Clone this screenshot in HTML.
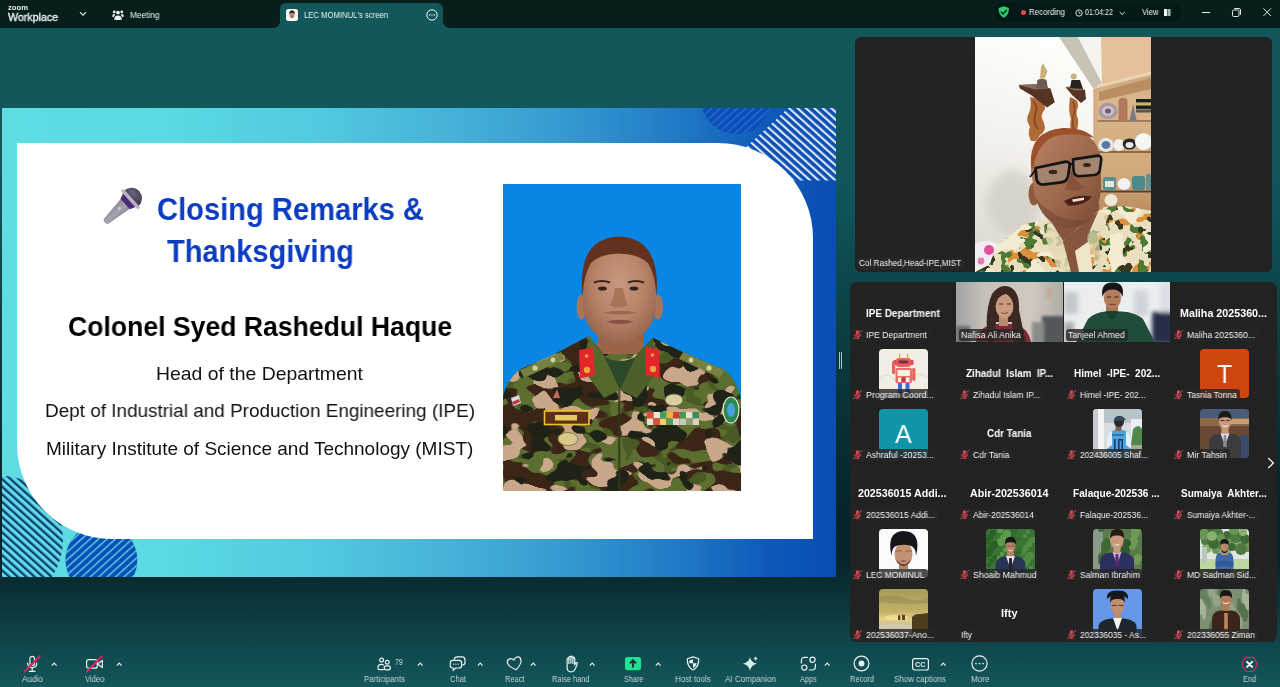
<!DOCTYPE html>
<html lang="en"><head><meta charset="utf-8"><title>Zoom Meeting</title><style>
*{box-sizing:border-box;margin:0;padding:0}
html,body{width:1280px;height:687px;overflow:hidden}
body{position:relative;font-family:"Liberation Sans",sans-serif;color:#fff;
 background:linear-gradient(180deg,#12585b 0px,#12585b 150px,#10545a 200px,#0c4448 300px,#0a3a3e 360px,#062e32 440px,#042529 520px,#05262a 560px,#082c30 578px,#104a4e 655px,#13565a 687px)}
.t{position:absolute;white-space:pre;line-height:1;transform-origin:0 0;display:block;will-change:transform}
.abs{position:absolute}
#titlebar{position:absolute;left:0;top:0;width:1280px;height:28px;background:#071e1d}
#tab{position:absolute;left:280px;top:3px;width:163px;height:25px;background:#12585b;border-radius:6px 6px 0 0}
#tab:before,#tab:after{content:"";position:absolute;bottom:0;width:6px;height:6px}
#tab:before{left:-6px;background:radial-gradient(circle at 0 0,rgba(0,0,0,0) 5.5px,#12585b 6px)}
#tab:after{right:-6px;background:radial-gradient(circle at 100% 0,rgba(0,0,0,0) 5.5px,#12585b 6px)}
#pill{position:absolute;left:994px;top:3px;width:187px;height:19px;border-radius:9.5px;background:#041817}
#slide{position:absolute;left:2px;top:108px;width:834px;height:469px;overflow:hidden;
 background:linear-gradient(90deg,#5fdde3 0%,#5cd9e2 20%,#52c9df 38%,#46b4d9 53%,#3599d0 68%,#2079c6 81%,#0e59b8 92%,#0a4db4 100%)}
#card{position:absolute;left:15px;top:35px;width:796px;height:396px;background:#fff;border-radius:0 95px 0 95px}
#speaker{position:absolute;left:855px;top:37px;width:417px;height:235px;background:#222;border-radius:6px;overflow:hidden}
#gallery{position:absolute;left:850px;top:282px;width:427px;height:360px;background:#222;border-radius:7px;overflow:hidden}
.tile{position:absolute;width:107px;height:60px}
.av{position:absolute;left:29px;top:6.5px;width:49px;height:49px;border-radius:4px;overflow:hidden}
.av svg,.vid svg{display:block}
.vid{position:absolute;left:0;top:0;width:106.3px;height:60px;overflow:hidden}
.lb{position:absolute;left:2px;top:46.5px;height:12px;background:rgba(38,38,38,.82);border-radius:3px}
#toolbar{position:absolute;left:0;top:650px;width:1280px;height:37px}
svg{overflow:visible}
</style></head>
<body>
<div id="titlebar"><span class="t" style="left:8.00px;top:3.85px;font-size:7.5px;font-weight:700;color:#e9f3f3;transform:scaleX(1.0207);">zoom</span><span class="t" style="left:8.00px;top:11.50px;font-size:11px;color:#e9f3f3;transform:scaleX(0.9659);-webkit-text-stroke:.35px #e9f3f3;">Workplace</span><svg class="abs" style="left:79px;top:11px" width="8" height="6" viewBox="0 0 8 6" ><path d="M1 1.2 L4 4.2 L7 1.2" fill="none" stroke="#e9f3f3" stroke-width="1.1"/></svg><svg class="abs" style="left:112px;top:9px" width="12" height="12" viewBox="0 0 12 12" ><g fill="#e9f3f3"><circle cx="6" cy="3.6" r="1.9"/><circle cx="2.2" cy="2.9" r="1.4"/><circle cx="9.8" cy="2.9" r="1.4"/><path d="M2.2 10.6 C2.2 7.6 3.6 6.4 6 6.4 C8.4 6.4 9.8 7.6 9.8 10.6 Q6 11.6 2.2 10.6Z"/><path d="M0.2 7.6 C0.2 5.6 1.1 4.9 2.6 5 L3.3 6 C2.3 6.8 2 7.6 1.9 8.3 Z"/><path d="M11.8 7.6 C11.8 5.6 10.9 4.9 9.4 5 L8.7 6 C9.7 6.8 10 7.6 10.1 8.3 Z"/></g></svg><span class="t" style="left:130.00px;top:10.80px;font-size:9px;color:#e9f3f3;transform:scaleX(0.9210);">Meeting</span><div id="tab"></div><svg class="abs" style="left:286px;top:9px" width="12" height="12" viewBox="0 0 12 12" ><rect width="12" height="12" rx="2.5" fill="#f4f4f4"/><path d="M2 12 Q2.5 9.5 6 9.5 Q9.5 9.5 10 12Z" fill="#fff"/><ellipse cx="6" cy="6" rx="2.4" ry="3" fill="#b8866a"/><path d="M3.2 5.2 Q3 1.6 6 1.6 Q9 1.6 8.8 5.2 Q8 3.6 6 3.8 Q4 3.6 3.2 5.2Z" fill="#1c1c22"/><path d="M4.3 7.6 Q6 9.6 7.7 7.6 Q6 8.4 4.3 7.6Z" fill="#3a2a24"/></svg><span class="t" style="left:304.00px;top:11.00px;font-size:9px;color:#e9f3f3;transform:scaleX(0.8550);">LEC MOMINUL's screen</span><svg class="abs" style="left:426px;top:8.5px" width="12" height="12" viewBox="0 0 12 12" ><circle cx="6" cy="6" r="5.2" fill="none" stroke="#e9f3f3" stroke-width="1"/><circle cx="3.6" cy="6" r=".7" fill="#e9f3f3"/><circle cx="6" cy="6" r=".7" fill="#e9f3f3"/><circle cx="8.4" cy="6" r=".7" fill="#e9f3f3"/></svg><div id="pill"></div><svg class="abs" style="left:998px;top:6.3px" width="11.5" height="12" viewBox="0 0 11.5 12" ><path d="M5.75 0.3 L10.8 2 C11 6.5 9.6 9.8 5.75 11.7 C1.9 9.8 .5 6.5 .7 2Z" fill="#2ecc6f"/><path d="M3.2 6 L5 7.9 L8.4 4.2" fill="none" stroke="#0a2a1c" stroke-width="1.5" stroke-linecap="round" stroke-linejoin="round"/></svg><div class="abs" style="left:1021px;top:10px;width:5.4px;height:5.4px;border-radius:50%;background:#f0464e"></div><span class="t" style="left:1029.20px;top:7.90px;font-size:9px;color:#e9f3f3;transform:scaleX(0.8774);">Recording</span><svg class="abs" style="left:1074.5px;top:8.7px" width="8" height="8" viewBox="0 0 8 8" ><circle cx="4" cy="4" r="3.2" fill="none" stroke="#e9f3f3" stroke-width=".9"/><path d="M4 2.2 V4.2 H5.6" fill="none" stroke="#e9f3f3" stroke-width=".8"/></svg><span class="t" style="left:1085.30px;top:7.90px;font-size:9px;color:#e9f3f3;transform:scaleX(0.7989);">01:04:22</span><svg class="abs" style="left:1118.5px;top:10.5px" width="6.4" height="5" viewBox="0 0 6.4 5" ><path d="M.7 1 L3.2 3.5 L5.7 1" fill="none" stroke="#e9f3f3" stroke-width="1"/></svg><span class="t" style="left:1141.70px;top:7.90px;font-size:9px;color:#e9f3f3;transform:scaleX(0.8575);">View</span><svg class="abs" style="left:1164.3px;top:8.8px" width="6.6" height="7" viewBox="0 0 6.6 7" ><rect x="0" y="0" width="3.1" height="7" fill="#f2f6f6"/><rect x="3.5" y="0" width="3.1" height="7" fill="#9fb0b0"/></svg><div class="abs" style="left:1201.5px;top:12px;width:8px;height:1px;background:#dfe9e9"></div><svg class="abs" style="left:1231.5px;top:7.5px" width="9" height="9" viewBox="0 0 9 9" ><rect x=".5" y="2" width="6.5" height="6.5" rx="1.2" fill="none" stroke="#dfe9e9" stroke-width="1"/><path d="M2.2 .5 H7 Q8.5 .5 8.5 2 V6.8" fill="none" stroke="#dfe9e9" stroke-width="1"/></svg><svg class="abs" style="left:1262.5px;top:8.3px" width="8.4" height="8.4" viewBox="0 0 8.4 8.4" ><path d="M.4 .4 L8 8 M8 .4 L.4 8" stroke="#dfe9e9" stroke-width="1" fill="none"/></svg></div>
<div id="slide"><svg class="abs" style="left:0px;top:0px" width="834" height="469" viewBox="0 0 834 469" ><defs>
<pattern id="pw" width="5.65" height="5.65" patternUnits="userSpaceOnUse" patternTransform="rotate(-48)"><rect width="2.1" height="5.65" fill="#dfe8fa"/></pattern>
<pattern id="pn" width="5.65" height="5.65" patternUnits="userSpaceOnUse" patternTransform="rotate(-48)"><rect width="2.3" height="5.65" fill="#0c3c74"/></pattern>
<pattern id="pb" width="5.65" height="5.65" patternUnits="userSpaceOnUse" patternTransform="rotate(48)"><rect width="1.1" height="5.65" fill="#2f74cf"/></pattern>
<pattern id="pc" width="5.65" height="5.65" patternUnits="userSpaceOnUse" patternTransform="rotate(48)"><rect width="1.3" height="5.65" fill="#62d8e6"/></pattern>
</defs>
<circle cx="734" cy="-9.2" r="35.2" fill="#0a4fb9"/><circle cx="734" cy="-9.2" r="35.2" fill="url(#pb)"/>
<path d="M786.2 0 H834 V72.6 H790 L740 43 Z" fill="#0d50b4"/>
<path d="M786.2 0 H834 V72.6 H790 L740 43 Z" fill="url(#pw)"/>
<ellipse cx="0" cy="432" rx="61" ry="64" fill="url(#pn)"/>
<circle cx="99.4" cy="452" r="36" fill="#0a50b6"/><circle cx="99.4" cy="452" r="36" fill="url(#pc)"/></svg><div id="card"></div><svg class="abs" style="left:0px;top:0px" width="834" height="469" viewBox="0 0 834 469" ><defs><linearGradient id="mh" x1="0" y1="0" x2="0" y2="1"><stop offset="0" stop-color="#8d8996"/><stop offset=".55" stop-color="#a7a3af"/><stop offset="1" stop-color="#8a8693"/></linearGradient>
<radialGradient id="md" cx=".45" cy=".35" r=".8"><stop offset="0" stop-color="#6b6276"/><stop offset="1" stop-color="#3b3346"/></radialGradient></defs>
<g transform="translate(102.8 114.6) rotate(-42.4) scale(1.06)">
<path d="M3 -3.3 L27 -6.3 V6.3 L3 3.3 Q0 3.3 0 0 Q0 -3.3 3 -3.3 Z" fill="url(#mh)"/>
<path d="M26 -6.6 L32.5 -9.2 V9.2 L26 6.6 Z" fill="#4a2b78"/>
<path d="M34 -10 A10 10 0 0 1 34 10 Z" fill="url(#md)"/>
<rect x="31.2" y="-12" width="3.2" height="24" rx="1.6" fill="#b9b3c3"/>
<circle cx="19" cy="-.6" r="1.5" fill="#cdc5d6"/>
</g></svg><span class="t" style="left:155.20px;top:86.10px;font-size:31px;font-weight:700;color:#0b3cc1;transform:scaleX(0.9393);">Closing Remarks &amp;</span><span class="t" style="left:165.00px;top:128.30px;font-size:31px;font-weight:700;color:#0b3cc1;transform:scaleX(0.9359);">Thanksgiving</span><span class="t" style="left:65.50px;top:205.90px;font-size:27px;font-weight:700;color:#000;transform:scaleX(0.9849);">Colonel Syed Rashedul Haque</span><span class="t" style="left:154.00px;top:255.70px;font-size:19px;color:#111;transform:scaleX(1.0207);">Head of the Department</span><span class="t" style="left:43.00px;top:292.90px;font-size:19px;color:#111;transform:scaleX(0.9954);">Dept of Industrial and Production Engineering (IPE)</span><span class="t" style="left:44.00px;top:330.90px;font-size:19px;color:#111;">Military Institute of Science and Technology (MIST)</span><div class="abs" style="left:501px;top:76px;width:238px;height:307px;overflow:hidden"><svg width="238" height="307" viewBox="0 0 238 307"><defs><filter id="cm1" x="0" y="0" width="100%" height="100%" color-interpolation-filters="sRGB"><feTurbulence type="fractalNoise" baseFrequency="0.03 0.045" numOctaves="2" seed="4"/><feColorMatrix type="matrix" values="0 0 0 0 0.231 0 0 0 0 0.145 0 0 0 0 0.090 40 0 0 0 -20"/><feComposite in2="SourceGraphic" operator="in"/></filter><filter id="cm2" x="0" y="0" width="100%" height="100%" color-interpolation-filters="sRGB"><feTurbulence type="fractalNoise" baseFrequency="0.035 0.05" numOctaves="2" seed="11"/><feColorMatrix type="matrix" values="0 0 0 0 0.784 0 0 0 0 0.655 0 0 0 0 0.541 40 0 0 0 -22.6"/><feComposite in2="SourceGraphic" operator="in"/></filter><filter id="cm3" x="0" y="0" width="100%" height="100%" color-interpolation-filters="sRGB"><feTurbulence type="fractalNoise" baseFrequency="0.04 0.05" numOctaves="2" seed="23"/><feColorMatrix type="matrix" values="0 0 0 0 0.122 0 0 0 0 0.133 0 0 0 0 0.086 40 0 0 0 -23"/><feComposite in2="SourceGraphic" operator="in"/></filter><filter id="cm4" x="0" y="0" width="100%" height="100%" color-interpolation-filters="sRGB"><feTurbulence type="fractalNoise" baseFrequency="0.05 0.06" numOctaves="2" seed="31"/><feColorMatrix type="matrix" values="0 0 0 0 0.290 0 0 0 0 0.353 0 0 0 0 0.141 40 0 0 0 -22.4"/><feComposite in2="SourceGraphic" operator="in"/></filter><radialGradient id="ofc" cx=".5" cy=".42" r=".62"><stop offset="0" stop-color="#c79880"/><stop offset=".55" stop-color="#b88468"/><stop offset="1" stop-color="#96644c"/></radialGradient></defs><rect width="238" height="307" fill="#0985e3"/><path d="M94 140 H140 V186 H94 Z" fill="#9a6449"/><path d="M0 307 V214 Q3 197 16 186 L50 171 L86 152 L100 170 H134 L150 154 L186 171 L222 186 Q235 197 238 216 V307 Z" fill="#5c6e30"/><path d="M0 307 V214 Q3 197 16 186 L50 171 L86 152 L100 170 H134 L150 154 L186 171 L222 186 Q235 197 238 216 V307 Z" fill="#000" filter="url(#cm4)"/><path d="M0 307 V214 Q3 197 16 186 L50 171 L86 152 L100 170 H134 L150 154 L186 171 L222 186 Q235 197 238 216 V307 Z" fill="#000" filter="url(#cm1)"/><path d="M0 307 V214 Q3 197 16 186 L50 171 L86 152 L100 170 H134 L150 154 L186 171 L222 186 Q235 197 238 216 V307 Z" fill="#000" filter="url(#cm2)"/><path d="M0 307 V214 Q3 197 16 186 L50 171 L86 152 L100 170 H134 L150 154 L186 171 L222 186 Q235 197 238 216 V307 Z" fill="#000" filter="url(#cm3)"/><rect x="115" y="204" width="2.4" height="103" fill="#2f3818" opacity=".75"/><path d="M100 172 L117 206 L134 172 Q117 182 100 172Z" fill="#2c4a2a"/><path d="M86 152 L100 170 L117 206 L101 214 L79 184 Z" fill="#55692c"/><path d="M150 154 L134 170 L117 206 L134 214 L157 184Z" fill="#4c5f28"/><path d="M76 166 L90 163.5 L92 191 L77 194.5 Z" fill="#e3262b"/><path d="M142.5 163 L156 165.5 L157 194 L143 191 Z" fill="#e3262b"/><circle cx="84" cy="186" r="3.2" fill="#eda43a"/><circle cx="150" cy="185" r="3.2" fill="#eda43a"/><circle cx="83.6" cy="172" r="1.8" fill="#eda43a"/><circle cx="149.4" cy="171" r="1.8" fill="#eda43a"/><path d="M17 186 L58 168 L62 175 L21 194 Z" fill="#76803f"/><path d="M221 186 L180 168 L176 175 L217 194 Z" fill="#76803f"/><circle cx="32" cy="184" r="2.6" fill="#d8cf9a"/><circle cx="206" cy="184" r="2.6" fill="#d8cf9a"/><circle cx="50" cy="176" r="2.4" fill="#d8cf9a"/><circle cx="188" cy="176" r="2.4" fill="#d8cf9a"/><ellipse cx="78.5" cy="123" rx="5" ry="12.5" fill="#a8745a"/><ellipse cx="155" cy="123" rx="5" ry="12.5" fill="#a8745a"/><path d="M80 100 Q79 60 116 56 Q153 60 153 100 V122 Q152 140 140 150 Q128 158.5 116.5 158.5 Q104 158.5 93 150 Q81 140 80 122 Z" fill="url(#ofc)"/><path d="M79.5 112 Q74 54 116 52.5 Q158 54 153.5 112 Q152 90 145 79 Q134 69.5 116 69.5 Q98 69.5 88 79 Q81 90 79.5 112 Z" fill="#62321f"/><path d="M91 98.5 Q99 95.5 107 98.5 M125 98.5 Q133 95.5 141 98.5" stroke="#3a241a" stroke-width="2" fill="none"/><ellipse cx="99.4" cy="104.6" rx="4.4" ry="2" fill="#33211a"/><ellipse cx="131" cy="104.6" rx="4.4" ry="2" fill="#33211a"/><path d="M112 104 Q110 118 106.5 121 Q116 126 125.5 121 Q122 118 120 104" fill="#a87458"/><path d="M103 137.6 Q117 134 131 137.6 Q117 142.6 103 137.6Z" fill="#8a5044"/><path d="M100 129 Q117 124.5 134 129 Q117 132 100 129Z" fill="#8c5c48" opacity=".7"/><rect x="41.5" y="227" width="44.5" height="13.5" fill="#5a3018" stroke="#f0c030" stroke-width="1.6"/><rect x="52" y="231" width="22" height="5.5" fill="#e8c860"/><rect x="144" y="228" width="6.5" height="6.5" fill="#e34a3a"/><rect x="150.5" y="228" width="6.5" height="6.5" fill="#f0e6d0"/><rect x="157" y="228" width="6.5" height="6.5" fill="#3aa05a"/><rect x="163.5" y="228" width="6.5" height="6.5" fill="#e8b23a"/><rect x="170" y="228" width="6.5" height="6.5" fill="#d03a3a"/><rect x="176.5" y="228" width="6.5" height="6.5" fill="#4a9a4a"/><rect x="183" y="228" width="6.5" height="6.5" fill="#e8e0d0"/><rect x="189.5" y="228" width="6.5" height="6.5" fill="#3a8a5a"/><rect x="144" y="234.5" width="6.5" height="6.5" fill="#e8e0d0"/><rect x="150.5" y="234.5" width="6.5" height="6.5" fill="#d8503a"/><rect x="157" y="234.5" width="6.5" height="6.5" fill="#e8d070"/><rect x="163.5" y="234.5" width="6.5" height="6.5" fill="#5a9a5a"/><rect x="170" y="234.5" width="6.5" height="6.5" fill="#e0d8c8"/><rect x="176.5" y="234.5" width="6.5" height="6.5" fill="#c8c8b8"/><rect x="183" y="234.5" width="6.5" height="6.5" fill="#8aa070"/><rect x="189.5" y="234.5" width="6.5" height="6.5" fill="#d8d0c0"/><ellipse cx="65" cy="255" rx="10" ry="6.5" fill="#d8c98a" stroke="#8a7a3a" stroke-width="1"/><ellipse cx="171" cy="216" rx="9" ry="6" fill="#d8d0a0" stroke="#6a6a3a" stroke-width="1"/><ellipse cx="228" cy="226" rx="8" ry="13" fill="#2a8a4a" stroke="#e8e8d8" stroke-width="1.2"/><ellipse cx="228" cy="226" rx="4" ry="7" fill="#4aa0d8"/><path d="M8 214 l8 -3 l2 8 l-8 3z" fill="#d8d8e8"/><path d="M9 218 l7 -3 l1 3 l-7 3z" fill="#c03a3a"/><path d="M50 214 l4 -9 l3 9z" fill="#c86a5a"/></svg></div></div>
<div id="speaker"><div class="abs" style="left:120px;top:0;width:176px;height:235px;overflow:hidden"><svg width="176" height="235" viewBox="0 0 176 235"><defs><linearGradient id="sw" x1=".2" y1="0" x2="0" y2="1"><stop offset="0" stop-color="#fdfdfb"/><stop offset=".45" stop-color="#f3f1ec"/><stop offset="1" stop-color="#d9d5cc"/></linearGradient><linearGradient id="sf" x1="0" y1="0" x2="1" y2="1"><stop offset="0" stop-color="#b98262"/><stop offset=".55" stop-color="#9c684b"/><stop offset="1" stop-color="#774833"/></linearGradient><linearGradient id="sc" x1="0" y1="0" x2="0" y2="1"><stop offset="0" stop-color="#c9a47c"/><stop offset=".18" stop-color="#dbb78e"/><stop offset=".75" stop-color="#d0a878"/><stop offset="1" stop-color="#b98c5e"/></linearGradient><filter id="sbl"><feGaussianBlur stdDeviation="5"/></filter><filter id="sh1" x="0" y="0" width="100%" height="100%" color-interpolation-filters="sRGB"><feTurbulence type="fractalNoise" baseFrequency="0.07 0.08" numOctaves="2" seed="5"/><feColorMatrix type="matrix" values="0 0 0 0 0.863 0 0 0 0 0.561 0 0 0 0 0.235 40 0 0 0 -22.8"/><feComposite in2="SourceGraphic" operator="in"/></filter><filter id="sh2" x="0" y="0" width="100%" height="100%" color-interpolation-filters="sRGB"><feTurbulence type="fractalNoise" baseFrequency="0.08 0.09" numOctaves="2" seed="17"/><feColorMatrix type="matrix" values="0 0 0 0 0.310 0 0 0 0 0.478 0 0 0 0 0.208 40 0 0 0 -23"/><feComposite in2="SourceGraphic" operator="in"/></filter><filter id="sh3" x="0" y="0" width="100%" height="100%" color-interpolation-filters="sRGB"><feTurbulence type="fractalNoise" baseFrequency="0.1 0.11" numOctaves="2" seed="29"/><feColorMatrix type="matrix" values="0 0 0 0 0.208 0 0 0 0 0.220 0 0 0 0 0.122 40 0 0 0 -24.8"/><feComposite in2="SourceGraphic" operator="in"/></filter><filter id="sh4" x="0" y="0" width="100%" height="100%" color-interpolation-filters="sRGB"><feTurbulence type="fractalNoise" baseFrequency="0.06 0.07" numOctaves="2" seed="41"/><feColorMatrix type="matrix" values="0 0 0 0 0.957 0 0 0 0 0.925 0 0 0 0 0.824 40 0 0 0 -23.2"/><feComposite in2="SourceGraphic" operator="in"/></filter></defs><rect width="176" height="235" fill="url(#sw)"/><ellipse cx="38" cy="165" rx="26" ry="32" fill="#c9c4ba" opacity=".55" filter="url(#sbl)"/><path d="M84 0 H103 L127 46 L118.5 52 Z" fill="#c9c3b5"/><path d="M103 0 H127 V46 Z" fill="#f5f3ee"/><path d="M126 0 H176 V35 L127 47 Z" fill="#e4c19a"/><path d="M118.5 52 L127 47 L176 35 V41 L124 55 Z" fill="#ecd0aa"/><path d="M118.5 52 L176 38 V176 H118.5 Z" fill="url(#sc)"/><path d="M124 55 L176 41 V52 L124 64 Z" fill="#b98e62"/><rect x="122" y="83" width="54" height="1.8" fill="#9a7a58"/><rect x="122" y="114" width="54" height="2" fill="#8a6a4a"/><rect x="124" y="153.5" width="52" height="2" fill="#5a4030"/><rect x="118.5" y="52" width="4" height="124" fill="#d6ae80"/><ellipse cx="133" cy="74" rx="9.4" ry="8.2" fill="#a79aa6"/><ellipse cx="133" cy="74" rx="6" ry="5" fill="#d9c0c0"/><ellipse cx="133" cy="74" rx="3" ry="2.6" fill="#6a5a88"/><rect x="143.5" y="61" width="9" height="24" rx="3.5" fill="#b27a58"/><path d="M154.5 84 l3.6 -17 l3.6 17z" fill="#7a7a84"/><rect x="161" y="62" width="15" height="3.4" fill="#1c1c1c"/><rect x="161" y="66" width="15" height="2" fill="#c8b850"/><rect x="161" y="68.5" width="15" height="3.4" fill="#1c1c1c"/><rect x="161" y="72.5" width="15" height="3" fill="#555"/><ellipse cx="131" cy="108" rx="7.7" ry="7" fill="#e4e8ec"/><ellipse cx="131" cy="108" rx="4.4" ry="4" fill="#5c78a0"/><ellipse cx="144" cy="108" rx="5.6" ry="6" fill="#f0f0ee"/><ellipse cx="154.5" cy="107" rx="6.8" ry="5.6" fill="#242424"/><ellipse cx="154.5" cy="108" rx="4" ry="3" fill="#e8e8e8"/><ellipse cx="168.5" cy="104.5" rx="8.6" ry="8.6" fill="#f6f6f2"/><rect x="128" y="140" width="13" height="13" rx="2" fill="#5a9090"/><rect x="130" y="144" width="9" height="6" fill="#dfe8e0"/><ellipse cx="149" cy="147" rx="6.5" ry="6" fill="#f2f2f2"/><rect x="157" y="139" width="13" height="14" rx="3" fill="#4a8a8a"/><rect x="171" y="137" width="5" height="16" rx="2" fill="#6a9090"/><ellipse cx="136" cy="163" rx="6.5" ry="6" fill="#efe9d8"/><path d="M55 60 Q70 62 70 72 Q64 78 69 86 Q72 94 65 98 L61 104 H56 Q52 96 55 90 Q50 82 54 76 Q57 68 55 60Z" fill="#b06a36"/><path d="M58 64 Q64 70 60 78 Q58 86 63 92" stroke="#7e4420" stroke-width="1.6" fill="none"/><path d="M95 60 Q104 62 103 70 Q100 76 103 82 Q104 90 100 97 H97 Q94 88 96 82 Q93 74 95 60Z" fill="#b06a36"/><path d="M98 64 Q101 72 98 80 Q97 88 99 94" stroke="#7e4420" stroke-width="1.2" fill="none"/><path d="M43.8 48 L60 47.2 L75.5 51.5 L79.8 65.2 L72 70.4 L56.7 58.4 L45 51.5 Z" fill="#553426"/><path d="M43.8 48 L60 47.2 L75.5 51.5 L60 52.5 Z" fill="#8a6a5c"/><path d="M90.5 50 L100 49.4 L110 53 L111 62 L106 66 L97 58 Z" fill="#553426"/><path d="M90.5 50 L100 49.4 L110 53 L100 53.6Z" fill="#8a6a5c"/><path d="M61 51.5 L62.5 43 Q67 40 71.5 43 L73 51.5Z" fill="#6c5c54"/><path d="M65 41 L66 30 L68 26 L70 30 L72.5 34 L70 41Z" fill="#c9b276"/><path d="M95 51 L96.5 43 H105 L108 52Z" fill="#26221e"/><circle cx="98.7" cy="39.5" r="3" fill="#c9b276"/><path d="M72 176 L124 166 L126 200 L96 235 H88 L84 200 Z" fill="#85553d"/><path d="M0 235 L9 228 L17 213 L48 187.5 L74 182 L88 204 L123.6 173.7 L129 170 L150 169 L176 173.7 V235 Z" fill="#e9dfbe"/><path d="M0 235 L9 228 L17 213 L48 187.5 L74 182 L88 204 L123.6 173.7 L129 170 L150 169 L176 173.7 V235 Z" fill="#000" filter="url(#sh1)"/><path d="M0 235 L9 228 L17 213 L48 187.5 L74 182 L88 204 L123.6 173.7 L129 170 L150 169 L176 173.7 V235 Z" fill="#000" filter="url(#sh2)"/><path d="M0 235 L9 228 L17 213 L48 187.5 L74 182 L88 204 L123.6 173.7 L129 170 L150 169 L176 173.7 V235 Z" fill="#000" filter="url(#sh3)"/><path d="M0 235 L9 228 L17 213 L48 187.5 L74 182 L88 204 L123.6 173.7 L129 170 L150 169 L176 173.7 V235 Z" fill="#000" filter="url(#sh4)"/><path d="M74 182 L88 204 L96 235 H84 L70 200 Z" fill="#e4dab6" opacity=".85"/><path d="M123.6 173.7 L112 200 L122 235 H128 L124 204 L134 178Z" fill="#e4dab6" opacity=".7"/><path d="M88 204 L123.6 173.7 L112 200 L118 235 H96 Z" fill="#85553d"/><path d="M100 214 L114 204 L118 235 H104Z" fill="#efe6c8"/><path d="M0 207 Q12 201 23 207 L14 228 L0 235 Z" fill="#f0eef2"/><circle cx="14" cy="213" r="5" fill="#e0509a"/><circle cx="6" cy="224" r="3.4" fill="#e87ab0"/><ellipse cx="59" cy="157" rx="5.5" ry="11.5" fill="#8f5a40"/><path d="M56 134 Q53 96 88 92.5 Q122 91 126 124 L126 152 Q124 176 112 186 Q100 193 88 190.5 Q68 185 60 160 Z" fill="url(#sf)"/><path d="M56 130 Q53 93.5 88 91 Q110 90.5 119 101 Q100 94.5 80 99 Q62 106 58 132 Z" fill="#9c502c"/><path d="M60 160 Q68 185 88 190.5 Q104 192 116 182 Q100 186 86 180 Q70 174 60 160Z" fill="#6e4230" opacity=".5"/><path d="M60.5 131 L91 124.6 Q95 124.4 94.6 129 L93 140 Q91 145 86 145.4 L68 147.6 Q62.5 147.6 61.6 142 Z" fill="#a4846f" stroke="#141414" stroke-width="2.8" stroke-linejoin="round"/><path d="M98 122.4 L123 118.6 Q126.6 118.6 126.2 123 L124.8 133 Q124 137.4 119 138 L104 139.2 Q99.4 139.2 98.6 134 Z" fill="#a4846f" stroke="#141414" stroke-width="2.6" stroke-linejoin="round"/><path d="M94 128 L98.4 126.4" stroke="#141414" stroke-width="2.2"/><path d="M60.5 133 L55 140" stroke="#141414" stroke-width="2"/><ellipse cx="78" cy="135" rx="4.4" ry="2.2" fill="#3a2418"/><ellipse cx="112" cy="128" rx="4" ry="2" fill="#3a2418"/><path d="M96 133 Q101 146 109 150 Q102 156.5 90 152 Q92 146 96 133Z" fill="#86523a"/><path d="M89 164 Q103 156.5 117 159.6 Q110 169.4 93 168.6 Z" fill="#4a2018"/><path d="M97 162.6 L109 160.4 L109 163 L98 165Z" fill="#e8e0d0"/></svg></div><div class="abs" style="left:1.5px;top:220.5px;width:107.5px;height:12.5px;background:rgba(40,40,40,.85);border-radius:3px"></div><span class="t" style="left:3.90px;top:222.10px;font-size:9px;color:#f2f2f2;transform:scaleX(0.9090);">Col Rashed,Head-IPE,MIST</span></div>
<div id="gallery"><div class="tile" style="left:0px;top:0px"><span class="t" style="left:15.60px;top:27.20px;font-size:10px;font-weight:700;transform:scaleX(0.9910);">IPE Department</span><div class="lb" style="left:2px;width:78px"><svg class="abs" style="left:.9px;top:1.5px" width="9.2" height="9.2" viewBox="0 0 10 10"><g fill="#ee4452"><rect x="3.2" y=".3" width="3.6" height="6" rx="1.8"/><path d="M1.5 4.3 h1 q0 2.6 2.5 2.6 q2.5 0 2.5 -2.6 h1 q0 3.2 -2.9 3.5 v.9 h1.5 v.9 h-4.2 v-.9 h1.5 v-.9 q-2.9 -.3 -2.9 -3.5z"/></g><path d="M1 9.3 L9 .9" stroke="#2a2a2a" stroke-width="1.7"/><path d="M.7 9.6 L9.3 .6" stroke="#f2606c" stroke-width=".85" stroke-linecap="round"/></svg></div><span class="t" style="left:15.50px;top:48.85px;font-size:9px;color:#f4f4f4;transform:scaleX(0.9527);">IPE Department</span></div><div class="tile" style="left:107px;top:0px"><div class="vid" style="left:-0.8px"><svg width="107" height="60" viewBox="0 0 107 60"><defs><linearGradient id="nf1" x1="0" y1="0" x2="1" y2="0"><stop offset="0" stop-color="#9fa1a4"/><stop offset=".25" stop-color="#c4bfb8"/><stop offset=".7" stop-color="#d0c9c0"/><stop offset="1" stop-color="#b0aca6"/></linearGradient><filter id="nfb"><feGaussianBlur stdDeviation="1.6"/></filter></defs><rect width="107" height="60" fill="url(#nf1)"/><g filter="url(#nfb)"><rect x="86" y="34" width="24" height="28" fill="#55595a"/><rect x="76" y="40" width="12" height="22" fill="#8a8c8a"/><rect x="90" y="6" width="6" height="10" fill="#c8a898"/><rect x="0" y="44" width="14" height="18" fill="#6a6c70"/></g><path d="M20 60 Q22 46 36 42 H58 Q72 45 75 60Z" fill="#7b2a38"/><path d="M32 60 Q28 30 36 12 Q44 1 54 5 Q64 10 63 28 Q66 44 70 60 H58 L56 40 H40 L38 60Z" fill="#3b2822"/><rect x="43" y="34" width="9" height="10" fill="#b98a70"/><ellipse cx="48.5" cy="24" rx="9" ry="12.5" fill="#c89a7e"/><path d="M39 24 Q38 8 50 7 Q60 9 58 26 Q56 14 50 12 Q42 13 39 24Z" fill="#3b2822"/><path d="M43 22 h4 M51 22 h4" stroke="#3a2a24" stroke-width=".9"/><path d="M45 30.6 Q48.5 32.6 52 30.6" stroke="#8a4a44" stroke-width="1" fill="none"/></svg></div><div class="lb" style="left:2px;width:65px"></div><span class="t" style="left:3.70px;top:48.85px;font-size:9px;color:#f4f4f4;transform:scaleX(0.9638);">Nafisa Ali Anika</span></div><div class="tile" style="left:214px;top:0px"><div class="vid" style="left:-0.1px"><svg width="107" height="60" viewBox="0 0 107 60"><defs><filter id="tjb"><feGaussianBlur stdDeviation="2"/></filter></defs><rect width="107" height="60" fill="#ecedef"/><g filter="url(#tjb)"><rect x="0" y="10" width="14" height="22" fill="#c4c8cc"/><rect x="70" y="8" width="14" height="26" fill="#d0d4da"/><rect x="88" y="30" width="22" height="32" fill="#272d4a"/><rect x="96" y="0" width="12" height="30" fill="#dcdfe6"/><rect x="0" y="40" width="10" height="22" fill="#a8acb0"/></g><path d="M12 60 L24 37 Q30 30.5 42 29.5 H58 Q72 30.5 79 37 L91 60Z" fill="#1f4d38"/><rect x="42" y="22" width="12" height="11" fill="#a87250"/><path d="M40 30 L48 38 L56 30 L52 29 H44Z" fill="#17402e"/><ellipse cx="48.5" cy="16" rx="8.6" ry="11" fill="#b27c5a"/><path d="M38.5 15 Q36 0 49 .5 Q61 0 58.5 15 Q56 7 48.5 7.5 Q41 7 38.5 15Z" fill="#16151a"/><path d="M43 15 h4 M50.5 15 h4" stroke="#2a1a16" stroke-width=".9"/><path d="M45.4 22.4 h6.4" stroke="#6a3a34" stroke-width=".9"/></svg></div><div class="lb" style="left:2px;width:61.9px"></div><span class="t" style="left:3.70px;top:48.85px;font-size:9px;color:#f4f4f4;transform:scaleX(0.9603);">Tanjeel Ahmed</span></div><div class="tile" style="left:321px;top:0px"><span class="t" style="left:9.00px;top:27.20px;font-size:10px;font-weight:700;transform:scaleX(1.0718);">Maliha 2025360...</span><div class="lb" style="left:2px;width:85px"><svg class="abs" style="left:.9px;top:1.5px" width="9.2" height="9.2" viewBox="0 0 10 10"><g fill="#ee4452"><rect x="3.2" y=".3" width="3.6" height="6" rx="1.8"/><path d="M1.5 4.3 h1 q0 2.6 2.5 2.6 q2.5 0 2.5 -2.6 h1 q0 3.2 -2.9 3.5 v.9 h1.5 v.9 h-4.2 v-.9 h1.5 v-.9 q-2.9 -.3 -2.9 -3.5z"/></g><path d="M1 9.3 L9 .9" stroke="#2a2a2a" stroke-width="1.7"/><path d="M.7 9.6 L9.3 .6" stroke="#f2606c" stroke-width=".85" stroke-linecap="round"/></svg></div><span class="t" style="left:15.50px;top:48.85px;font-size:9px;color:#f4f4f4;transform:scaleX(0.9502);">Maliha 2025360...</span></div><div class="tile" style="left:0px;top:60px"><div class="av"><svg width="49" height="49" viewBox="0 0 49 49"><rect x="0" y="0" width="49" height="49" fill="#f1eee6"/><path d="M0 30 Q8 22 14 30 T30 30 T49 28" fill="none" stroke="#d8d4cc" stroke-width=".8"/><rect x="17" y="9" width="15" height="9" rx="3" fill="#e9605c"/><rect x="19.5" y="11.5" width="10" height="3" rx="1" fill="#7a2a4a"/><rect x="14.5" y="11" width="3" height="5" rx="1" fill="#d94a4a"/><rect x="31.5" y="11" width="3" height="5" rx="1" fill="#d94a4a"/><rect x="20" y="4.5" width="1.2" height="5" fill="#d8b040"/><rect x="28" y="4.5" width="1.2" height="5" fill="#d8b040"/><rect x="16.5" y="19" width="16.5" height="15" rx="1.5" fill="#ee6c66"/><rect x="18.5" y="21" width="12.5" height="6" fill="#f6efe8"/><rect x="19" y="28.5" width="3" height="4.5" fill="#f6efe8"/><rect x="23" y="28.5" width="3" height="4.5" fill="#b23a4a"/><rect x="27" y="28.5" width="3.5" height="4.5" fill="#f6efe8"/><rect x="13" y="12" width="3.2" height="13" rx="1.4" fill="#e9605c"/><rect x="33.2" y="19" width="3.2" height="13" rx="1.4" fill="#e9605c"/><rect x="19" y="34" width="4" height="9" fill="#3b6bd6"/><rect x="26.5" y="34" width="4" height="9" fill="#3b6bd6"/><rect x="17.5" y="42.5" width="6" height="2.5" rx="1" fill="#2a4aa0"/><rect x="26" y="42.5" width="6" height="2.5" rx="1" fill="#2a4aa0"/></svg></div><div class="lb" style="left:2px;width:85px"><svg class="abs" style="left:.9px;top:1.5px" width="9.2" height="9.2" viewBox="0 0 10 10"><g fill="#ee4452"><rect x="3.2" y=".3" width="3.6" height="6" rx="1.8"/><path d="M1.5 4.3 h1 q0 2.6 2.5 2.6 q2.5 0 2.5 -2.6 h1 q0 3.2 -2.9 3.5 v.9 h1.5 v.9 h-4.2 v-.9 h1.5 v-.9 q-2.9 -.3 -2.9 -3.5z"/></g><path d="M1 9.3 L9 .9" stroke="#2a2a2a" stroke-width="1.7"/><path d="M.7 9.6 L9.3 .6" stroke="#f2606c" stroke-width=".85" stroke-linecap="round"/></svg></div><span class="t" style="left:15.50px;top:48.85px;font-size:9px;color:#f4f4f4;transform:scaleX(0.9851);">Program Coord...</span></div><div class="tile" style="left:107px;top:60px"><span class="t" style="left:9.00px;top:27.20px;font-size:10px;font-weight:700;transform:scaleX(0.9805);">Zihadul  Islam  IP...</span><div class="lb" style="left:2px;width:84px"><svg class="abs" style="left:.9px;top:1.5px" width="9.2" height="9.2" viewBox="0 0 10 10"><g fill="#ee4452"><rect x="3.2" y=".3" width="3.6" height="6" rx="1.8"/><path d="M1.5 4.3 h1 q0 2.6 2.5 2.6 q2.5 0 2.5 -2.6 h1 q0 3.2 -2.9 3.5 v.9 h1.5 v.9 h-4.2 v-.9 h1.5 v-.9 q-2.9 -.3 -2.9 -3.5z"/></g><path d="M1 9.3 L9 .9" stroke="#2a2a2a" stroke-width="1.7"/><path d="M.7 9.6 L9.3 .6" stroke="#f2606c" stroke-width=".85" stroke-linecap="round"/></svg></div><span class="t" style="left:15.50px;top:48.85px;font-size:9px;color:#f4f4f4;transform:scaleX(0.9453);">Zihadul Islam IP...</span></div><div class="tile" style="left:214px;top:60px"><span class="t" style="left:9.65px;top:27.20px;font-size:10px;font-weight:700;transform:scaleX(0.9947);">Himel  -IPE-  202...</span><div class="lb" style="left:2px;width:82.6px"><svg class="abs" style="left:.9px;top:1.5px" width="9.2" height="9.2" viewBox="0 0 10 10"><g fill="#ee4452"><rect x="3.2" y=".3" width="3.6" height="6" rx="1.8"/><path d="M1.5 4.3 h1 q0 2.6 2.5 2.6 q2.5 0 2.5 -2.6 h1 q0 3.2 -2.9 3.5 v.9 h1.5 v.9 h-4.2 v-.9 h1.5 v-.9 q-2.9 -.3 -2.9 -3.5z"/></g><path d="M1 9.3 L9 .9" stroke="#2a2a2a" stroke-width="1.7"/><path d="M.7 9.6 L9.3 .6" stroke="#f2606c" stroke-width=".85" stroke-linecap="round"/></svg></div><span class="t" style="left:15.50px;top:48.85px;font-size:9px;color:#f4f4f4;transform:scaleX(0.9235);">Himel -IPE- 202...</span></div><div class="tile" style="left:321px;top:60px"><div class="av"><svg width="49" height="49" viewBox="0 0 49 49"><rect x="0" y="0" width="49" height="49" fill="#cf4510"/></svg></div><span class="t" style="left:46.30px;top:18.60px;font-size:26px;transform:scaleX(0.9565);">T</span><div class="lb" style="left:2px;width:67px"><svg class="abs" style="left:.9px;top:1.5px" width="9.2" height="9.2" viewBox="0 0 10 10"><g fill="#ee4452"><rect x="3.2" y=".3" width="3.6" height="6" rx="1.8"/><path d="M1.5 4.3 h1 q0 2.6 2.5 2.6 q2.5 0 2.5 -2.6 h1 q0 3.2 -2.9 3.5 v.9 h1.5 v.9 h-4.2 v-.9 h1.5 v-.9 q-2.9 -.3 -2.9 -3.5z"/></g><path d="M1 9.3 L9 .9" stroke="#2a2a2a" stroke-width="1.7"/><path d="M.7 9.6 L9.3 .6" stroke="#f2606c" stroke-width=".85" stroke-linecap="round"/></svg></div><span class="t" style="left:15.50px;top:48.85px;font-size:9px;color:#f4f4f4;transform:scaleX(0.9456);">Tasnia Tonna</span></div><div class="tile" style="left:0px;top:120px"><div class="av"><svg width="49" height="49" viewBox="0 0 49 49"><rect x="0" y="0" width="49" height="49" fill="#0f95a8"/></svg></div><span class="t" style="left:44.80px;top:18.60px;font-size:26px;transform:scaleX(0.9686);">A</span><div class="lb" style="left:2px;width:85px"><svg class="abs" style="left:.9px;top:1.5px" width="9.2" height="9.2" viewBox="0 0 10 10"><g fill="#ee4452"><rect x="3.2" y=".3" width="3.6" height="6" rx="1.8"/><path d="M1.5 4.3 h1 q0 2.6 2.5 2.6 q2.5 0 2.5 -2.6 h1 q0 3.2 -2.9 3.5 v.9 h1.5 v.9 h-4.2 v-.9 h1.5 v-.9 q-2.9 -.3 -2.9 -3.5z"/></g><path d="M1 9.3 L9 .9" stroke="#2a2a2a" stroke-width="1.7"/><path d="M.7 9.6 L9.3 .6" stroke="#f2606c" stroke-width=".85" stroke-linecap="round"/></svg></div><span class="t" style="left:15.50px;top:48.85px;font-size:9px;color:#f4f4f4;transform:scaleX(0.9571);">Ashraful -20253...</span></div><div class="tile" style="left:107px;top:120px"><span class="t" style="left:30.25px;top:27.20px;font-size:10px;font-weight:700;transform:scaleX(0.9804);">Cdr Tania</span><div class="lb" style="left:2px;width:53.5px"><svg class="abs" style="left:.9px;top:1.5px" width="9.2" height="9.2" viewBox="0 0 10 10"><g fill="#ee4452"><rect x="3.2" y=".3" width="3.6" height="6" rx="1.8"/><path d="M1.5 4.3 h1 q0 2.6 2.5 2.6 q2.5 0 2.5 -2.6 h1 q0 3.2 -2.9 3.5 v.9 h1.5 v.9 h-4.2 v-.9 h1.5 v-.9 q-2.9 -.3 -2.9 -3.5z"/></g><path d="M1 9.3 L9 .9" stroke="#2a2a2a" stroke-width="1.7"/><path d="M.7 9.6 L9.3 .6" stroke="#f2606c" stroke-width=".85" stroke-linecap="round"/></svg></div><span class="t" style="left:15.50px;top:48.85px;font-size:9px;color:#f4f4f4;transform:scaleX(0.9515);">Cdr Tania</span></div><div class="tile" style="left:214px;top:120px"><div class="av"><svg width="49" height="49" viewBox="0 0 49 49"><rect x="0" y="0" width="49" height="49" fill="#d9dde0"/><rect x="0" y="0" width="49" height="14" fill="#b8c4cc"/><rect x="5" y="0" width="6" height="49" fill="#f4f4f2"/><rect x="0" y="0" width="5" height="49" fill="#c8ccd0"/><path d="M38 10 h11 v22 h-11z" fill="#e8eef2"/><path d="M40 20 Q46 14 49 20 V36 H38 Z" fill="#4f8a4a"/><rect x="36" y="36" width="13" height="13" fill="#a8a890"/><path d="M14 49 V30 Q14 23 22 21 H30 Q38 23 38 30 V49 Z" fill="#4ea4dc"/><path d="M14 30 Q14 24 19 22 L19 36 L14 40Z" fill="#e8eef4"/><path d="M38 30 Q38 24 33 22 L33 36 L38 40Z" fill="#e8eef4"/><rect x="22.5" y="14" width="6" height="8" fill="#8a6048"/><ellipse cx="26" cy="12.5" rx="5" ry="5.6" fill="#2a2a32"/><path d="M21 10 Q26 4 31.5 9 L33 11 L21 12Z" fill="#3a4a5a"/><path d="M21 30 h1.6 v12 h-1.6z M25 30 h5 v12 h-5z" fill="#173a6a"/><rect x="26.6" y="31.6" width="1.8" height="8.8" fill="#4ea4dc"/><rect x="19" y="25" width="12" height="2" fill="#2a5a8a" opacity=".6"/></svg></div><div class="lb" style="left:2px;width:85px"><svg class="abs" style="left:.9px;top:1.5px" width="9.2" height="9.2" viewBox="0 0 10 10"><g fill="#ee4452"><rect x="3.2" y=".3" width="3.6" height="6" rx="1.8"/><path d="M1.5 4.3 h1 q0 2.6 2.5 2.6 q2.5 0 2.5 -2.6 h1 q0 3.2 -2.9 3.5 v.9 h1.5 v.9 h-4.2 v-.9 h1.5 v-.9 q-2.9 -.3 -2.9 -3.5z"/></g><path d="M1 9.3 L9 .9" stroke="#2a2a2a" stroke-width="1.7"/><path d="M.7 9.6 L9.3 .6" stroke="#f2606c" stroke-width=".85" stroke-linecap="round"/></svg></div><span class="t" style="left:15.50px;top:48.85px;font-size:9px;color:#f4f4f4;transform:scaleX(0.9242);">202436005 Shaf...</span></div><div class="tile" style="left:321px;top:120px"><div class="av"><svg width="49" height="49" viewBox="0 0 49 49"><rect x="0" y="0" width="49" height="49" fill="#6a4a34"/><rect x="0" y="0" width="49" height="9" fill="#4a5a78"/><rect x="0" y="9" width="49" height="8" fill="#8a6a48"/><rect x="30" y="10" width="19" height="5" fill="#c8a070"/><rect x="40" y="26" width="9" height="23" fill="#3a4a6a"/><path d="M9 49 V33 Q9 26 19 24.5 L31 24.5 Q41 26 41 33 V49 Z" fill="#3c3c3e"/><path d="M20.5 24 L25 37 L29.5 24 Z" fill="#e8e8ec"/><path d="M23.6 26 L26.4 26 L26.8 38 L23.2 38 Z" fill="#8a8a90"/><rect x="21.5" y="17.8" width="7" height="7" fill="#c9987a"/><ellipse cx="25" cy="12.4" rx="6.2" ry="8.4" fill="#c9987a"/><path d="M18.4 11.4 Q17.8 1.5 25 2 Q32.2 1.5 31.6 11.4 Q30.2 7.78 25 8.2 Q19.8 7.78 18.4 11.4 Z" fill="#1c1a1a"/><path d="M20.5 11.5 h4 M26 11.5 h4" stroke="#222" stroke-width=".8"/><path d="M22 16.5 Q25 18.6 28 16.5" stroke="#fff" stroke-width=".9" fill="none"/></svg></div><div class="lb" style="left:2px;width:57px"><svg class="abs" style="left:.9px;top:1.5px" width="9.2" height="9.2" viewBox="0 0 10 10"><g fill="#ee4452"><rect x="3.2" y=".3" width="3.6" height="6" rx="1.8"/><path d="M1.5 4.3 h1 q0 2.6 2.5 2.6 q2.5 0 2.5 -2.6 h1 q0 3.2 -2.9 3.5 v.9 h1.5 v.9 h-4.2 v-.9 h1.5 v-.9 q-2.9 -.3 -2.9 -3.5z"/></g><path d="M1 9.3 L9 .9" stroke="#2a2a2a" stroke-width="1.7"/><path d="M.7 9.6 L9.3 .6" stroke="#f2606c" stroke-width=".85" stroke-linecap="round"/></svg></div><span class="t" style="left:15.50px;top:48.85px;font-size:9px;color:#f4f4f4;transform:scaleX(0.9790);">Mir Tahsin</span></div><div class="tile" style="left:0px;top:180px"><span class="t" style="left:8.25px;top:27.20px;font-size:10px;font-weight:700;transform:scaleX(1.0661);">202536015 Addi...</span><div class="lb" style="left:2px;width:86px"><svg class="abs" style="left:.9px;top:1.5px" width="9.2" height="9.2" viewBox="0 0 10 10"><g fill="#ee4452"><rect x="3.2" y=".3" width="3.6" height="6" rx="1.8"/><path d="M1.5 4.3 h1 q0 2.6 2.5 2.6 q2.5 0 2.5 -2.6 h1 q0 3.2 -2.9 3.5 v.9 h1.5 v.9 h-4.2 v-.9 h1.5 v-.9 q-2.9 -.3 -2.9 -3.5z"/></g><path d="M1 9.3 L9 .9" stroke="#2a2a2a" stroke-width="1.7"/><path d="M.7 9.6 L9.3 .6" stroke="#f2606c" stroke-width=".85" stroke-linecap="round"/></svg></div><span class="t" style="left:15.50px;top:48.85px;font-size:9px;color:#f4f4f4;transform:scaleX(0.9507);">202536015 Addi...</span></div><div class="tile" style="left:107px;top:180px"><span class="t" style="left:13.25px;top:27.20px;font-size:10px;font-weight:700;transform:scaleX(1.0696);">Abir-202536014</span><div class="lb" style="left:2px;width:78px"><svg class="abs" style="left:.9px;top:1.5px" width="9.2" height="9.2" viewBox="0 0 10 10"><g fill="#ee4452"><rect x="3.2" y=".3" width="3.6" height="6" rx="1.8"/><path d="M1.5 4.3 h1 q0 2.6 2.5 2.6 q2.5 0 2.5 -2.6 h1 q0 3.2 -2.9 3.5 v.9 h1.5 v.9 h-4.2 v-.9 h1.5 v-.9 q-2.9 -.3 -2.9 -3.5z"/></g><path d="M1 9.3 L9 .9" stroke="#2a2a2a" stroke-width="1.7"/><path d="M.7 9.6 L9.3 .6" stroke="#f2606c" stroke-width=".85" stroke-linecap="round"/></svg></div><span class="t" style="left:15.50px;top:48.85px;font-size:9px;color:#f4f4f4;transform:scaleX(0.9522);">Abir-202536014</span></div><div class="tile" style="left:214px;top:180px"><span class="t" style="left:9.15px;top:27.20px;font-size:10px;font-weight:700;transform:scaleX(1.0127);">Falaque-202536 ...</span><div class="lb" style="left:2px;width:85px"><svg class="abs" style="left:.9px;top:1.5px" width="9.2" height="9.2" viewBox="0 0 10 10"><g fill="#ee4452"><rect x="3.2" y=".3" width="3.6" height="6" rx="1.8"/><path d="M1.5 4.3 h1 q0 2.6 2.5 2.6 q2.5 0 2.5 -2.6 h1 q0 3.2 -2.9 3.5 v.9 h1.5 v.9 h-4.2 v-.9 h1.5 v-.9 q-2.9 -.3 -2.9 -3.5z"/></g><path d="M1 9.3 L9 .9" stroke="#2a2a2a" stroke-width="1.7"/><path d="M.7 9.6 L9.3 .6" stroke="#f2606c" stroke-width=".85" stroke-linecap="round"/></svg></div><span class="t" style="left:15.50px;top:48.85px;font-size:9px;color:#f4f4f4;transform:scaleX(0.9307);">Falaque-202536...</span></div><div class="tile" style="left:321px;top:180px"><span class="t" style="left:9.50px;top:27.20px;font-size:10px;font-weight:700;">Sumaiya  Akhter...</span><div class="lb" style="left:2px;width:85.5px"><svg class="abs" style="left:.9px;top:1.5px" width="9.2" height="9.2" viewBox="0 0 10 10"><g fill="#ee4452"><rect x="3.2" y=".3" width="3.6" height="6" rx="1.8"/><path d="M1.5 4.3 h1 q0 2.6 2.5 2.6 q2.5 0 2.5 -2.6 h1 q0 3.2 -2.9 3.5 v.9 h1.5 v.9 h-4.2 v-.9 h1.5 v-.9 q-2.9 -.3 -2.9 -3.5z"/></g><path d="M1 9.3 L9 .9" stroke="#2a2a2a" stroke-width="1.7"/><path d="M.7 9.6 L9.3 .6" stroke="#f2606c" stroke-width=".85" stroke-linecap="round"/></svg></div><span class="t" style="left:15.50px;top:48.85px;font-size:9px;color:#f4f4f4;transform:scaleX(0.9316);">Sumaiya Akhter-...</span></div><div class="tile" style="left:0px;top:240px"><div class="av"><svg width="49" height="49" viewBox="0 0 49 49"><rect x="0" y="0" width="49" height="49" fill="#fbfbfb"/><path d="M9 49 Q10 41 18 39 H32 Q40 41 41 49Z" fill="#f0f0f2"/><rect x="20" y="32" width="9" height="8" fill="#b88468"/><ellipse cx="24.5" cy="25" rx="9" ry="12" fill="#c39272"/><path d="M12.5 27 Q7 3 24 2 Q43 2 37 27 Q37 18 31 16.4 Q24.5 15 18 16.6 Q12.6 18.4 12.5 27Z" fill="#15151b"/><path d="M16 22 h6.5 M26.5 22 h6.5" stroke="#555" stroke-width=".7"/><path d="M17 30 Q24.5 41 32 30 Q30 36 24.5 37 Q19 36 17 30Z" fill="#3a2a26"/><path d="M21 32 Q24.5 30.6 28 32 Q24.5 33.6 21 32Z" fill="#8a4a40"/></svg></div><div class="lb" style="left:2px;width:75.6px"><svg class="abs" style="left:.9px;top:1.5px" width="9.2" height="9.2" viewBox="0 0 10 10"><g fill="#ee4452"><rect x="3.2" y=".3" width="3.6" height="6" rx="1.8"/><path d="M1.5 4.3 h1 q0 2.6 2.5 2.6 q2.5 0 2.5 -2.6 h1 q0 3.2 -2.9 3.5 v.9 h1.5 v.9 h-4.2 v-.9 h1.5 v-.9 q-2.9 -.3 -2.9 -3.5z"/></g><path d="M1 9.3 L9 .9" stroke="#2a2a2a" stroke-width="1.7"/><path d="M.7 9.6 L9.3 .6" stroke="#f2606c" stroke-width=".85" stroke-linecap="round"/></svg></div><span class="t" style="left:15.50px;top:48.85px;font-size:9px;color:#f4f4f4;transform:scaleX(0.9374);">LEC MOMINUL</span></div><div class="tile" style="left:107px;top:240px"><div class="av"><svg width="49" height="49" viewBox="0 0 49 49"><rect x="0" y="0" width="49" height="49" fill="#3a7333"/><circle cx="0" cy="0" r="2.2" fill="#2b6128"/><circle cx="37" cy="23" r="3.2" fill="#4f8c42"/><circle cx="25" cy="6" r="4.2" fill="#316c2b"/><circle cx="13" cy="29" r="2.2" fill="#5c9a4c"/><circle cx="1" cy="12" r="3.2" fill="#2b6128"/><circle cx="38" cy="35" r="4.2" fill="#4f8c42"/><circle cx="26" cy="18" r="2.2" fill="#316c2b"/><circle cx="14" cy="1" r="3.2" fill="#5c9a4c"/><circle cx="2" cy="24" r="4.2" fill="#2b6128"/><circle cx="39" cy="7" r="2.2" fill="#4f8c42"/><circle cx="27" cy="30" r="3.2" fill="#316c2b"/><circle cx="15" cy="13" r="4.2" fill="#5c9a4c"/><circle cx="3" cy="36" r="2.2" fill="#2b6128"/><circle cx="40" cy="19" r="3.2" fill="#4f8c42"/><circle cx="28" cy="2" r="4.2" fill="#316c2b"/><circle cx="16" cy="25" r="2.2" fill="#5c9a4c"/><circle cx="4" cy="8" r="3.2" fill="#2b6128"/><circle cx="41" cy="31" r="4.2" fill="#4f8c42"/><circle cx="29" cy="14" r="2.2" fill="#316c2b"/><circle cx="17" cy="37" r="3.2" fill="#5c9a4c"/><circle cx="5" cy="20" r="4.2" fill="#2b6128"/><circle cx="42" cy="3" r="2.2" fill="#4f8c42"/><circle cx="30" cy="26" r="3.2" fill="#316c2b"/><circle cx="18" cy="9" r="4.2" fill="#5c9a4c"/><circle cx="6" cy="32" r="2.2" fill="#2b6128"/><circle cx="43" cy="15" r="3.2" fill="#4f8c42"/><circle cx="31" cy="38" r="4.2" fill="#316c2b"/><circle cx="19" cy="21" r="2.2" fill="#5c9a4c"/><circle cx="7" cy="4" r="3.2" fill="#2b6128"/><circle cx="44" cy="27" r="4.2" fill="#4f8c42"/><circle cx="32" cy="10" r="2.2" fill="#316c2b"/><circle cx="20" cy="33" r="3.2" fill="#5c9a4c"/><circle cx="8" cy="16" r="4.2" fill="#2b6128"/><circle cx="45" cy="39" r="2.2" fill="#4f8c42"/><circle cx="33" cy="22" r="3.2" fill="#316c2b"/><circle cx="21" cy="5" r="4.2" fill="#5c9a4c"/><circle cx="9" cy="28" r="2.2" fill="#2b6128"/><circle cx="46" cy="11" r="3.2" fill="#4f8c42"/><circle cx="34" cy="34" r="4.2" fill="#316c2b"/><circle cx="22" cy="17" r="2.2" fill="#5c9a4c"/><path d="M9.5 49 V36 Q9.5 29 18.5 27.5 L30.5 27.5 Q39.5 29 39.5 36 V49 Z" fill="#2a3458"/><path d="M20 27 L24.5 40 L29 27 Z" fill="#e8ecf2"/><path d="M23.1 29 L25.9 29 L26.3 41 L22.7 41 Z" fill="#22242e"/><rect x="21" y="20.2" width="7" height="7" fill="#b98262"/><ellipse cx="24.5" cy="16.6" rx="5" ry="6.6" fill="#b98262"/><path d="M19.1 15.6 Q18.5 7.5 24.5 8 Q30.5 7.5 29.9 15.6 Q28.5 12.97 24.5 13.3 Q20.5 12.97 19.1 15.6 Z" fill="#17151a"/><path d="M21 17 h3 M25.5 17 h3" stroke="#333" stroke-width=".6"/><path d="M22.3 21 Q24.5 22.6 26.7 21" stroke="#f4f4f4" stroke-width=".8" fill="none"/></svg></div><div class="lb" style="left:2px;width:80.7px"><svg class="abs" style="left:.9px;top:1.5px" width="9.2" height="9.2" viewBox="0 0 10 10"><g fill="#ee4452"><rect x="3.2" y=".3" width="3.6" height="6" rx="1.8"/><path d="M1.5 4.3 h1 q0 2.6 2.5 2.6 q2.5 0 2.5 -2.6 h1 q0 3.2 -2.9 3.5 v.9 h1.5 v.9 h-4.2 v-.9 h1.5 v-.9 q-2.9 -.3 -2.9 -3.5z"/></g><path d="M1 9.3 L9 .9" stroke="#2a2a2a" stroke-width="1.7"/><path d="M.7 9.6 L9.3 .6" stroke="#f2606c" stroke-width=".85" stroke-linecap="round"/></svg></div><span class="t" style="left:15.50px;top:48.85px;font-size:9px;color:#f4f4f4;transform:scaleX(0.9718);">Shoaib Mahmud</span></div><div class="tile" style="left:214px;top:240px"><div class="av"><svg width="49" height="49" viewBox="0 0 49 49"><rect x="0" y="0" width="49" height="49" fill="#5a7a4a"/><rect x="0" y="0" width="10" height="49" fill="#8a9a88"/><circle cx="8" cy="0" r="3" fill="#3f6a35"/><circle cx="39" cy="17" r="4" fill="#6f9a55"/><circle cx="29" cy="34" r="5" fill="#2f5a2c"/><circle cx="19" cy="15" r="3" fill="#86aa70"/><circle cx="9" cy="32" r="4" fill="#3f6a35"/><circle cx="40" cy="13" r="5" fill="#6f9a55"/><circle cx="30" cy="30" r="3" fill="#2f5a2c"/><circle cx="20" cy="11" r="4" fill="#86aa70"/><circle cx="10" cy="28" r="5" fill="#3f6a35"/><circle cx="41" cy="9" r="3" fill="#6f9a55"/><circle cx="31" cy="26" r="4" fill="#2f5a2c"/><circle cx="21" cy="7" r="5" fill="#86aa70"/><circle cx="11" cy="24" r="3" fill="#3f6a35"/><circle cx="42" cy="5" r="4" fill="#6f9a55"/><circle cx="32" cy="22" r="5" fill="#2f5a2c"/><circle cx="22" cy="3" r="3" fill="#86aa70"/><circle cx="12" cy="20" r="4" fill="#3f6a35"/><circle cx="43" cy="1" r="5" fill="#6f9a55"/><circle cx="33" cy="18" r="3" fill="#2f5a2c"/><circle cx="23" cy="35" r="4" fill="#86aa70"/><circle cx="13" cy="16" r="5" fill="#3f6a35"/><circle cx="44" cy="33" r="3" fill="#6f9a55"/><circle cx="34" cy="14" r="4" fill="#2f5a2c"/><circle cx="24" cy="31" r="5" fill="#86aa70"/><circle cx="14" cy="12" r="3" fill="#3f6a35"/><circle cx="45" cy="29" r="4" fill="#6f9a55"/><path d="M7 49 V32 Q7 25 18 23.5 L30 23.5 Q41 25 41 32 V49 Z" fill="#2b2f62"/><path d="M19.5 23 L24 36 L28.5 23 Z" fill="#c8b4e0"/><path d="M22.6 25 L25.4 25 L25.8 37 L22.2 37 Z" fill="#5a2a6a"/><rect x="20.5" y="17" width="7" height="7" fill="#c99a7c"/><ellipse cx="24" cy="11" rx="6.6" ry="9" fill="#c99a7c"/><path d="M17 10 Q16.4 -0.5 24 0 Q31.6 -0.5 31 10 Q29.6 6.05 24 6.5 Q18.4 6.05 17 10 Z" fill="#241a18"/><path d="M21.6 15.4 Q24 17 26.4 15.4" stroke="#fff" stroke-width=".8" fill="none"/></svg></div><div class="lb" style="left:2px;width:77px"><svg class="abs" style="left:.9px;top:1.5px" width="9.2" height="9.2" viewBox="0 0 10 10"><g fill="#ee4452"><rect x="3.2" y=".3" width="3.6" height="6" rx="1.8"/><path d="M1.5 4.3 h1 q0 2.6 2.5 2.6 q2.5 0 2.5 -2.6 h1 q0 3.2 -2.9 3.5 v.9 h1.5 v.9 h-4.2 v-.9 h1.5 v-.9 q-2.9 -.3 -2.9 -3.5z"/></g><path d="M1 9.3 L9 .9" stroke="#2a2a2a" stroke-width="1.7"/><path d="M.7 9.6 L9.3 .6" stroke="#f2606c" stroke-width=".85" stroke-linecap="round"/></svg></div><span class="t" style="left:15.50px;top:48.85px;font-size:9px;color:#f4f4f4;transform:scaleX(0.9519);">Salman Ibrahim</span></div><div class="tile" style="left:321px;top:240px"><div class="av"><svg width="49" height="49" viewBox="0 0 49 49"><rect x="0" y="0" width="49" height="49" fill="#dfe6e2"/><rect x="0" y="30" width="49" height="12" fill="#bcd8a0"/><rect x="0" y="40" width="49" height="9" fill="#7a9a5a"/><circle cx="0" cy="0" r="4" fill="#4f7a40"/><circle cx="29" cy="13" r="5" fill="#6a9555"/><circle cx="9" cy="2" r="6" fill="#3f6a35"/><circle cx="38" cy="15" r="4" fill="#8ab070"/><circle cx="18" cy="4" r="5" fill="#4f7a40"/><circle cx="47" cy="17" r="6" fill="#6a9555"/><circle cx="27" cy="6" r="4" fill="#3f6a35"/><circle cx="7" cy="19" r="5" fill="#8ab070"/><circle cx="36" cy="8" r="6" fill="#4f7a40"/><circle cx="16" cy="21" r="4" fill="#6a9555"/><circle cx="45" cy="10" r="5" fill="#3f6a35"/><circle cx="25" cy="23" r="6" fill="#8ab070"/><circle cx="5" cy="12" r="4" fill="#4f7a40"/><circle cx="34" cy="1" r="5" fill="#6a9555"/><circle cx="14" cy="14" r="6" fill="#3f6a35"/><circle cx="43" cy="3" r="4" fill="#8ab070"/><circle cx="23" cy="16" r="5" fill="#4f7a40"/><circle cx="3" cy="5" r="6" fill="#6a9555"/><circle cx="32" cy="18" r="4" fill="#3f6a35"/><circle cx="12" cy="7" r="5" fill="#8ab070"/><circle cx="41" cy="20" r="6" fill="#4f7a40"/><circle cx="21" cy="9" r="4" fill="#6a9555"/><rect x="2" y="18" width="5" height="16" fill="#b8c8c0"/><path d="M15.5 49 V32.5 Q15.5 25.5 18.5 24 L30.5 24 Q33.5 25.5 33.5 32.5 V40 Z" fill="#3f68a8"/><rect x="21" y="19" width="7" height="7" fill="#b88a6c"/><ellipse cx="24.5" cy="17" rx="3.8" ry="5" fill="#b88a6c"/><path d="M20.3 16 Q19.7 9.5 24.5 10 Q29.3 9.5 28.7 16 Q27.3 14.25 24.5 14.5 Q21.7 14.25 20.3 16 Z" fill="#1a1a1a"/><path d="M20.8 20 Q24.5 25.5 28.2 20 Q27.5 23.6 24.5 24.2 Q21.5 23.6 20.8 20Z" fill="#1a1a1a"/><path d="M15.5 33 Q24.5 30 33.5 33 L33 38 Q24.5 35 16 38Z" fill="#355a98"/><rect x="18" y="40" width="13" height="9" fill="#3a4658"/></svg></div><div class="lb" style="left:2px;width:86px"><svg class="abs" style="left:.9px;top:1.5px" width="9.2" height="9.2" viewBox="0 0 10 10"><g fill="#ee4452"><rect x="3.2" y=".3" width="3.6" height="6" rx="1.8"/><path d="M1.5 4.3 h1 q0 2.6 2.5 2.6 q2.5 0 2.5 -2.6 h1 q0 3.2 -2.9 3.5 v.9 h1.5 v.9 h-4.2 v-.9 h1.5 v-.9 q-2.9 -.3 -2.9 -3.5z"/></g><path d="M1 9.3 L9 .9" stroke="#2a2a2a" stroke-width="1.7"/><path d="M.7 9.6 L9.3 .6" stroke="#f2606c" stroke-width=".85" stroke-linecap="round"/></svg></div><span class="t" style="left:15.50px;top:48.85px;font-size:9px;color:#f4f4f4;transform:scaleX(0.9448);">MD Sadman Sid...</span></div><div class="tile" style="left:0px;top:300px"><div class="av"><svg width="49" height="49" viewBox="0 0 49 49"><defs><linearGradient id="sun1" x1="0" y1="0" x2="0" y2="1"><stop offset="0" stop-color="#a89c58"/><stop offset=".45" stop-color="#c2b068"/><stop offset=".62" stop-color="#e6cf80"/><stop offset=".7" stop-color="#cfc29a"/><stop offset="1" stop-color="#bdb596"/></linearGradient></defs><rect x="0" y="0" width="49" height="49" fill="url(#sun1)"/><path d="M0 8 Q12 4 26 9 T49 8 V14 Q30 16 0 13Z" fill="#988c50" opacity=".6"/><ellipse cx="17" cy="28.6" rx="12" ry="2.6" fill="#f4e29a" opacity=".8"/><path d="M33 49 V28 Q36 24.5 41 25 L49 24 V49Z" fill="#4e3d1c"/><path d="M19 31 v-4.6 l2.4 -.4 v5z M23 31 v-5.4 l3 .4 v5z" fill="#5a4620"/><path d="M0 36 Q14 32 33 37 V49 H0Z" fill="#d6cfb4" opacity=".7"/></svg></div><div class="lb" style="left:2px;width:85px"><svg class="abs" style="left:.9px;top:1.5px" width="9.2" height="9.2" viewBox="0 0 10 10"><g fill="#ee4452"><rect x="3.2" y=".3" width="3.6" height="6" rx="1.8"/><path d="M1.5 4.3 h1 q0 2.6 2.5 2.6 q2.5 0 2.5 -2.6 h1 q0 3.2 -2.9 3.5 v.9 h1.5 v.9 h-4.2 v-.9 h1.5 v-.9 q-2.9 -.3 -2.9 -3.5z"/></g><path d="M1 9.3 L9 .9" stroke="#2a2a2a" stroke-width="1.7"/><path d="M.7 9.6 L9.3 .6" stroke="#f2606c" stroke-width=".85" stroke-linecap="round"/></svg></div><span class="t" style="left:15.50px;top:48.85px;font-size:9px;color:#f4f4f4;transform:scaleX(0.9502);">202536037-Ano...</span></div><div class="tile" style="left:107px;top:300px"><span class="t" style="left:44.25px;top:27.20px;font-size:10px;font-weight:700;transform:scaleX(1.1000);">Ifty</span><div class="lb" style="left:2px;width:16.2px"></div><span class="t" style="left:3.70px;top:48.85px;font-size:9px;color:#f4f4f4;transform:scaleX(0.9155);">Ifty</span></div><div class="tile" style="left:214px;top:300px"><div class="av"><svg width="49" height="49" viewBox="0 0 49 49"><rect x="0" y="0" width="49" height="49" fill="#5c8fe2"/><rect x="0" y="0" width="49" height="49" fill="#6fa0ec" opacity=".5"/><path d="M5.5 49 V38 Q5.5 31 18.5 29.5 L30.5 29.5 Q43.5 31 43.5 38 V49 Z" fill="#20242c"/><path d="M20 29 L24.5 42 L29 29 Z" fill="#f2f2f4"/><rect x="21" y="22" width="7" height="7" fill="#c0906e"/><ellipse cx="24.5" cy="15" rx="7" ry="10" fill="#c0906e"/><path d="M17.1 14 Q16.5 2.5 24.5 3 Q32.5 2.5 31.9 14 Q30.5 9.5 24.5 10 Q18.5 9.5 17.1 14 Z" fill="#17171d"/><path d="M18.6 16.4 h5 M25.6 16.4 h5" stroke="#222" stroke-width=".8"/><path d="M14 10 Q13 1 24.5 1.4 Q36 1 35 10 Q30 5.6 24.5 6 Q19 5.6 14 10Z" fill="#17171d"/></svg></div><div class="lb" style="left:2px;width:83px"><svg class="abs" style="left:.9px;top:1.5px" width="9.2" height="9.2" viewBox="0 0 10 10"><g fill="#ee4452"><rect x="3.2" y=".3" width="3.6" height="6" rx="1.8"/><path d="M1.5 4.3 h1 q0 2.6 2.5 2.6 q2.5 0 2.5 -2.6 h1 q0 3.2 -2.9 3.5 v.9 h1.5 v.9 h-4.2 v-.9 h1.5 v-.9 q-2.9 -.3 -2.9 -3.5z"/></g><path d="M1 9.3 L9 .9" stroke="#2a2a2a" stroke-width="1.7"/><path d="M.7 9.6 L9.3 .6" stroke="#f2606c" stroke-width=".85" stroke-linecap="round"/></svg></div><span class="t" style="left:15.50px;top:48.85px;font-size:9px;color:#f4f4f4;transform:scaleX(0.9353);">202336035 - As...</span></div><div class="tile" style="left:321px;top:300px"><div class="av"><svg width="49" height="49" viewBox="0 0 49 49"><rect x="0" y="0" width="49" height="49" fill="#7d8f72"/><ellipse cx="0" cy="0" rx="2" ry="5" fill="#66805e"/><ellipse cx="31" cy="19" rx="3" ry="6" fill="#93a585"/><ellipse cx="13" cy="38" rx="4" ry="7" fill="#57704f"/><ellipse cx="44" cy="8" rx="2" ry="8" fill="#a6b596"/><ellipse cx="26" cy="27" rx="3" ry="5" fill="#66805e"/><ellipse cx="8" cy="46" rx="4" ry="6" fill="#93a585"/><ellipse cx="39" cy="16" rx="2" ry="7" fill="#57704f"/><ellipse cx="21" cy="35" rx="3" ry="8" fill="#a6b596"/><ellipse cx="3" cy="5" rx="4" ry="5" fill="#66805e"/><ellipse cx="34" cy="24" rx="2" ry="6" fill="#93a585"/><ellipse cx="16" cy="43" rx="3" ry="7" fill="#57704f"/><ellipse cx="47" cy="13" rx="4" ry="8" fill="#a6b596"/><ellipse cx="29" cy="32" rx="2" ry="5" fill="#66805e"/><ellipse cx="11" cy="2" rx="3" ry="6" fill="#93a585"/><ellipse cx="42" cy="21" rx="4" ry="7" fill="#57704f"/><ellipse cx="24" cy="40" rx="2" ry="8" fill="#a6b596"/><ellipse cx="6" cy="10" rx="3" ry="5" fill="#66805e"/><ellipse cx="37" cy="29" rx="4" ry="6" fill="#93a585"/><ellipse cx="19" cy="48" rx="2" ry="7" fill="#57704f"/><ellipse cx="1" cy="18" rx="3" ry="8" fill="#a6b596"/><ellipse cx="32" cy="37" rx="4" ry="5" fill="#66805e"/><ellipse cx="14" cy="7" rx="2" ry="6" fill="#93a585"/><ellipse cx="45" cy="26" rx="3" ry="7" fill="#57704f"/><ellipse cx="27" cy="45" rx="4" ry="8" fill="#a6b596"/><ellipse cx="9" cy="15" rx="2" ry="5" fill="#66805e"/><ellipse cx="40" cy="34" rx="3" ry="6" fill="#93a585"/><ellipse cx="22" cy="4" rx="4" ry="7" fill="#57704f"/><ellipse cx="4" cy="23" rx="2" ry="8" fill="#a6b596"/><ellipse cx="35" cy="42" rx="3" ry="5" fill="#66805e"/><ellipse cx="17" cy="12" rx="4" ry="6" fill="#93a585"/><path d="M12 49 V30 Q12 23 20 21.5 L32 21.5 Q40 23 40 30 V49 Z" fill="#3a241c"/><rect x="22.5" y="14.8" width="7" height="7" fill="#b27a58"/><ellipse cx="26" cy="10.4" rx="5.6" ry="7.4" fill="#b27a58"/><path d="M20 9.4 Q19.4 0.5 26 1 Q32.6 0.5 32 9.4 Q30.6 6.33 26 6.7 Q21.4 6.33 20 9.4 Z" fill="#1a1716"/><rect x="24.2" y="24" width="3.6" height="18" fill="#b8865a"/><path d="M22.6 13.4 Q26 16 29.4 13.4" stroke="#fff" stroke-width=".9" fill="none"/><path d="M12 44 Q26 38 40 44 V49 H12Z" fill="#9a6a4a"/></svg></div><div class="lb" style="left:2px;width:85px"><svg class="abs" style="left:.9px;top:1.5px" width="9.2" height="9.2" viewBox="0 0 10 10"><g fill="#ee4452"><rect x="3.2" y=".3" width="3.6" height="6" rx="1.8"/><path d="M1.5 4.3 h1 q0 2.6 2.5 2.6 q2.5 0 2.5 -2.6 h1 q0 3.2 -2.9 3.5 v.9 h1.5 v.9 h-4.2 v-.9 h1.5 v-.9 q-2.9 -.3 -2.9 -3.5z"/></g><path d="M1 9.3 L9 .9" stroke="#2a2a2a" stroke-width="1.7"/><path d="M.7 9.6 L9.3 .6" stroke="#f2606c" stroke-width=".85" stroke-linecap="round"/></svg></div><span class="t" style="left:15.50px;top:48.85px;font-size:9px;color:#f4f4f4;transform:scaleX(0.9371);">202336055 Ziman</span></div><svg class="abs" style="left:416.5px;top:175px" width="8" height="12" viewBox="0 0 8 12" ><path d="M1.2 1 L6.4 6 L1.2 11" fill="none" stroke="#f2f2f2" stroke-width="1.3"/></svg></div>
<div class="abs" style="left:839px;top:352px;width:1px;height:17px;background:#a3c8c5"></div><div class="abs" style="left:841px;top:352px;width:1px;height:17px;background:#a3c8c5"></div>
<div id="toolbar"><svg class="abs" style="left:24px;top:5px" width="17" height="18" viewBox="0 0 17 18" ><g fill="none" stroke="#e9f3f3" stroke-width="1.2" stroke-linecap="round" stroke-linejoin="round"><rect x="5.9" y="1.3" width="4.6" height="9.2" rx="2.3"/><path d="M3.6 8 Q3.6 12.6 8.2 12.6 Q12.8 12.6 12.8 8"/><path d="M8.2 12.6 V16.3 M5.4 16.4 H11"/></g><path d="M.6 16.6 L15.8 1.2" stroke="#dc2260" stroke-width="2" stroke-linecap="round"/></svg><svg class="abs" style="left:50.5px;top:11.5px" width="6.4" height="4.4" viewBox="0 0 6.4 4.4" ><path d="M.8 3.6 L3.2 1.1 L5.6 3.6" fill="none" stroke="#e9f3f3" stroke-width="1.15"/></svg><span class="t" style="left:22.00px;top:25.10px;font-size:9px;color:#c3d5d6;transform:scaleX(0.9118);">Audio</span><svg class="abs" style="left:85px;top:5px" width="19" height="18" viewBox="0 0 19 18" ><g fill="none" stroke="#e9f3f3" stroke-width="1.2" stroke-linecap="round" stroke-linejoin="round"><rect x="1.6" y="4.6" width="10.6" height="8.6" rx="2"/><path d="M12.4 8.9 L17.4 5.4 V12.6 Z"/></g><path d="M1.8 16.6 L16.8 1.5" stroke="#dc2260" stroke-width="2" stroke-linecap="round"/></svg><svg class="abs" style="left:116px;top:11.5px" width="6.4" height="4.4" viewBox="0 0 6.4 4.4" ><path d="M.8 3.6 L3.2 1.1 L5.6 3.6" fill="none" stroke="#e9f3f3" stroke-width="1.15"/></svg><span class="t" style="left:84.60px;top:25.10px;font-size:9px;color:#c3d5d6;transform:scaleX(0.8487);">Video</span><svg class="abs" style="left:377px;top:7px" width="14" height="14" viewBox="0 0 14 14" ><g fill="none" stroke="#e9f3f3" stroke-width="1.2" stroke-linecap="round" stroke-linejoin="round"><circle cx="4.6" cy="3" r="1.9"/><path d="M6.4 12.6 H2.6 Q.9 12.6 .9 11 Q.9 7.4 4.6 7.4 Q5.8 7.4 6.6 7.9"/><circle cx="10.3" cy="5.2" r="1.9"/><rect x="7.2" y="8.9" width="6.2" height="3.9" rx="1.95"/></g></svg><span class="t" style="left:395.40px;top:7.75px;font-size:8.5px;color:#c3d5d6;transform:scaleX(0.8238);">79</span><svg class="abs" style="left:416.5px;top:11.5px" width="6.4" height="4.4" viewBox="0 0 6.4 4.4" ><path d="M.8 3.6 L3.2 1.1 L5.6 3.6" fill="none" stroke="#e9f3f3" stroke-width="1.15"/></svg><span class="t" style="left:364.00px;top:25.10px;font-size:9px;color:#c3d5d6;transform:scaleX(0.8718);">Participants</span><svg class="abs" style="left:449px;top:6px" width="17" height="16" viewBox="0 0 17 16" ><g fill="none" stroke="#e9f3f3" stroke-width="1.2" stroke-linecap="round" stroke-linejoin="round"><path d="M5.2 3.4 Q5.6 .8 8.2 .8 H13 Q16 .8 16 3.8 V6.2 Q16 8.8 13.6 9"/><path d="M3.8 4.3 H10 Q12.6 4.3 12.6 6.9 V9.4 Q12.6 12 10 12 H6.6 L4.2 14.6 V12 H3.8 Q1.2 12 1.2 9.4 V6.9 Q1.2 4.3 3.8 4.3 Z"/></g><g fill="#e9f3f3"><circle cx="4.6" cy="8.2" r=".6"/><circle cx="6.9" cy="8.2" r=".6"/><circle cx="9.2" cy="8.2" r=".6"/></g></svg><svg class="abs" style="left:476.7px;top:11.5px" width="6.4" height="4.4" viewBox="0 0 6.4 4.4" ><path d="M.8 3.6 L3.2 1.1 L5.6 3.6" fill="none" stroke="#e9f3f3" stroke-width="1.15"/></svg><span class="t" style="left:450.00px;top:25.10px;font-size:9px;color:#c3d5d6;transform:scaleX(0.8414);">Chat</span><svg class="abs" style="left:506px;top:6px" width="18" height="16" viewBox="0 0 18 16" ><g fill="none" stroke="#e9f3f3" stroke-width="1.2" stroke-linecap="round" stroke-linejoin="round" transform="rotate(-14 8.8 7.8)"><path d="M8.8 13.9 C5.2 11.4 1.9 8.8 1.9 5.4 C1.9 3.2 3.5 1.8 5.3 1.8 C6.8 1.8 8 2.6 8.8 4 C9.6 2.6 10.8 1.8 12.3 1.8 C14.1 1.8 15.7 3.2 15.7 5.4 C15.7 8.8 12.4 11.4 8.8 13.9 Z"/></g></svg><svg class="abs" style="left:530.2px;top:11.5px" width="6.4" height="4.4" viewBox="0 0 6.4 4.4" ><path d="M.8 3.6 L3.2 1.1 L5.6 3.6" fill="none" stroke="#e9f3f3" stroke-width="1.15"/></svg><span class="t" style="left:504.80px;top:25.10px;font-size:9px;color:#c3d5d6;transform:scaleX(0.8207);">React</span><svg class="abs" style="left:563.5px;top:5px" width="14" height="18" viewBox="0 0 14 18" ><g fill="none" stroke="#e9f3f3" stroke-width="1.2" stroke-linecap="round" stroke-linejoin="round"><path d="M3.1 9.6 V4.2 Q3.1 3.2 4 3.2 Q4.9 3.2 4.9 4.2 V2.4 Q4.9 1.3 5.9 1.3 Q6.9 1.3 6.9 2.4 V2.1 Q6.9 1 7.9 1 Q8.9 1 8.9 2.1 V3.2 Q8.9 2.3 9.8 2.3 Q10.7 2.3 10.7 3.3 V10 L11.6 8.3 Q12.3 7.2 13.1 7.7 Q13.6 8.1 13.2 9 L11.4 13.6 Q10.2 16.8 7 16.8 Q3.1 16.8 3.1 12.6 Z"/><path d="M4.9 4.2 V8.4 M6.9 2.4 V8.2 M8.9 3.2 V8.4"/></g></svg><svg class="abs" style="left:589.1px;top:11.5px" width="6.4" height="4.4" viewBox="0 0 6.4 4.4" ><path d="M.8 3.6 L3.2 1.1 L5.6 3.6" fill="none" stroke="#e9f3f3" stroke-width="1.15"/></svg><span class="t" style="left:551.90px;top:25.10px;font-size:9px;color:#c3d5d6;transform:scaleX(0.8233);">Raise hand</span><svg class="abs" style="left:625px;top:7px" width="16" height="13.2" viewBox="0 0 16 13.2" ><rect width="16" height="13.2" rx="2.2" fill="#1fe391"/><path d="M8 10.4 V3.6 M4.9 6.4 L8 3.3 L11.1 6.4" fill="none" stroke="#0b3336" stroke-width="1.9" stroke-linejoin="miter"/></svg><svg class="abs" style="left:654.5px;top:11.5px" width="6.4" height="4.4" viewBox="0 0 6.4 4.4" ><path d="M.8 3.6 L3.2 1.1 L5.6 3.6" fill="none" stroke="#e9f3f3" stroke-width="1.15"/></svg><span class="t" style="left:623.70px;top:25.10px;font-size:9px;color:#c3d5d6;transform:scaleX(0.8031);">Share</span><svg class="abs" style="left:686px;top:6.4px" width="14" height="15" viewBox="0 0 14 15" ><path d="M7 .9 L12.7 2.8 C12.9 8 11.3 11.8 7 14 C2.7 11.8 1.1 8 1.3 2.8 Z" fill="none" stroke="#e9f3f3" stroke-width="1.2" stroke-linecap="round" stroke-linejoin="round"/><path d="M7 3.2 V7.2 H3.4 C3.2 5.8 3.3 4.6 3.4 4.4 Z M7 7.2 H10.6 C10.3 9.4 9 10.9 7 12 Z" fill="#e9f3f3"/></svg><span class="t" style="left:675.00px;top:25.10px;font-size:9px;color:#c3d5d6;transform:scaleX(0.8918);">Host tools</span><svg class="abs" style="left:742px;top:6px" width="16" height="16" viewBox="0 0 16 16" ><path d="M8 1 C8.9 4.8 10.6 6.6 15 7.8 C10.6 9 8.9 10.8 8 15 C7.1 10.8 5.4 9 .8 7.8 C5.4 6.6 7.1 4.8 8 1 Z" fill="#d4eeee"/><path d="M13.6 0 C13.9 1.5 14.6 2.2 16.2 2.6 C14.6 3 13.9 3.7 13.6 5.2 C13.3 3.7 12.6 3 11 2.6 C12.6 2.2 13.3 1.5 13.6 0Z" fill="#d4eeee"/></svg><span class="t" style="left:725.20px;top:25.10px;font-size:9px;color:#c3d5d6;transform:scaleX(0.8922);">AI Companion</span><svg class="abs" style="left:800px;top:6px" width="17" height="16" viewBox="0 0 17 16" ><g fill="none" stroke="#e9f3f3" stroke-width="1.2" stroke-linecap="round" stroke-linejoin="round"><path d="M1.4 7 V4.6 Q1.4 1.4 4.6 1.4 H7.4"/><circle cx="12.5" cy="3.7" r="2.6"/><circle cx="4.3" cy="11.6" r="2.6"/><path d="M9.4 14 H12 Q15.4 14 15.4 10.6 V8.2"/></g></svg><svg class="abs" style="left:824px;top:11.5px" width="6.4" height="4.4" viewBox="0 0 6.4 4.4" ><path d="M.8 3.6 L3.2 1.1 L5.6 3.6" fill="none" stroke="#e9f3f3" stroke-width="1.15"/></svg><span class="t" style="left:799.80px;top:25.10px;font-size:9px;color:#c3d5d6;transform:scaleX(0.8140);">Apps</span><svg class="abs" style="left:853.4px;top:5.1px" width="17" height="17" viewBox="0 0 17 17" ><circle cx="8.5" cy="8.5" r="7.4" fill="none" stroke="#e9f3f3" stroke-width="1.2" stroke-linecap="round" stroke-linejoin="round"/><circle cx="8.5" cy="8.5" r="2.9" fill="#e9f3f3"/></svg><span class="t" style="left:850.00px;top:25.10px;font-size:9px;color:#c3d5d6;transform:scaleX(0.8271);">Record</span><svg class="abs" style="left:911.5px;top:7.6px" width="17" height="12.6" viewBox="0 0 17 12.6" ><rect x=".6" y=".6" width="15.8" height="11.4" rx="2" fill="none" stroke="#e9f3f3" stroke-width="1.2" stroke-linecap="round" stroke-linejoin="round"/></svg><span class="t" style="left:914.90px;top:10.50px;font-size:7.2px;font-weight:700;color:#e9f3f3;transform:scaleX(0.9817);">CC</span><svg class="abs" style="left:940.3px;top:11.5px" width="6.4" height="4.4" viewBox="0 0 6.4 4.4" ><path d="M.8 3.6 L3.2 1.1 L5.6 3.6" fill="none" stroke="#e9f3f3" stroke-width="1.15"/></svg><span class="t" style="left:894.40px;top:25.10px;font-size:9px;color:#c3d5d6;transform:scaleX(0.8865);">Show captions</span><svg class="abs" style="left:971.3px;top:5.1px" width="17" height="17" viewBox="0 0 17 17" ><circle cx="8.5" cy="8.5" r="7.6" fill="none" stroke="#e9f3f3" stroke-width="1.2" stroke-linecap="round" stroke-linejoin="round"/><g fill="#e9f3f3"><circle cx="5" cy="8.5" r=".85"/><circle cx="8.5" cy="8.5" r=".85"/><circle cx="12" cy="8.5" r=".85"/></g></svg><span class="t" style="left:970.60px;top:25.10px;font-size:9px;color:#c3d5d6;transform:scaleX(0.8969);">More</span><svg class="abs" style="left:1241px;top:5.5px" width="17" height="17" viewBox="0 0 17 17" ><path d="M.8 8.4 L4.7 1.3 H12.5 L16.4 8.4 L12.5 15.5 H4.7 Z" fill="none" stroke="#d8246b" stroke-width="1.2" stroke-linejoin="round"/><path d="M6.1 5.9 L11.1 10.9 M11.1 5.9 L6.1 10.9" stroke="#fff" stroke-width="2" stroke-linecap="round"/></svg><span class="t" style="left:1242.80px;top:25.10px;font-size:9px;color:#c3d5d6;transform:scaleX(0.8242);">End</span></div>
</body></html>
